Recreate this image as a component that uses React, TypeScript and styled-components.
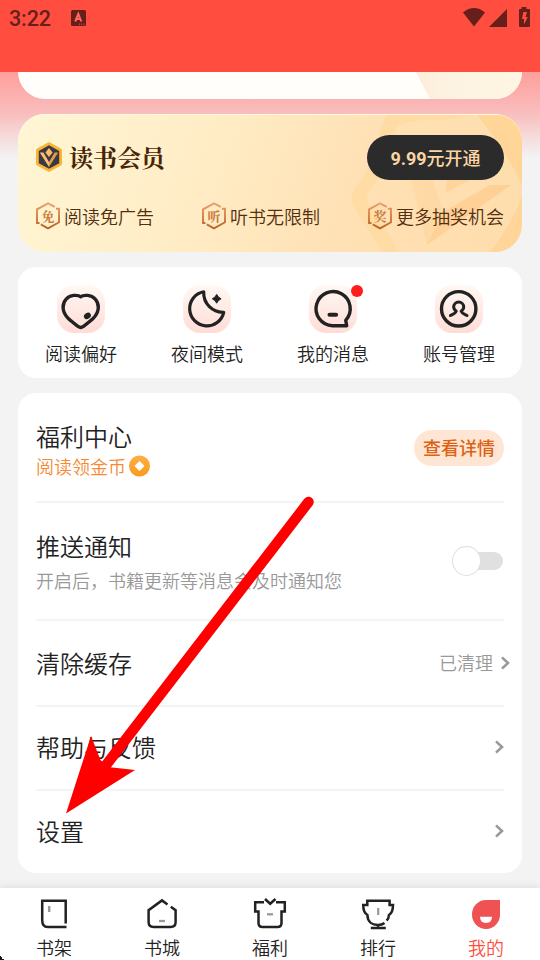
import React from "react";
import styled, { createGlobalStyle } from "styled-components";

const Global = createGlobalStyle`
  * { box-sizing: border-box; }
  body { margin: 0; background: #f3f3f3; }
`;

const sans = `"Noto Sans CJK SC", "Noto Sans", sans-serif`;
const light = `"Noto Sans CJK SC DemiLight", "Noto Sans CJK SC", "Noto Sans", sans-serif`;

const Page = styled.div`
  position: relative;
  width: 540px;
  height: 960px;
  overflow: hidden;
  display: flex;
  flex-direction: column;
  background: #f3f3f3;
  color: #222;
  font-family: ${light};
  font-weight: 350;
  svg { display: block; flex: none; }
`;

const StatusBar = styled.header`
  flex: none;
  height: 72px;
  background: #ff4e40;
  color: #661f1a;
  display: flex;
  align-items: flex-start;
  padding: 0 9px;
`;

const Clock = styled.span`
  font: 500 21.500px/37px Roboto, sans-serif;
  letter-spacing: -0.1px;
  width: 62px;
`;

const StatusIcons = styled.div`
  display: flex;
  align-items: center;
  height: 36px;
  &:last-child { margin-left: auto; }
`;

const Content = styled.main`
  flex: none;
  height: 816px;
  padding: 0 18px;
  display: flex;
  flex-direction: column;
  gap: 15px;
  background: linear-gradient(#fd9f9b 0px, #f9bebe 42px, #f6d8d7 62px, #f3f3f3 86px);
`;

const UpperCard = styled.section`
  flex: none;
  height: 27px;
  border-radius: 0 0 28px 28px;
  overflow: hidden;
  background: #fffefb;
  display: flex;
  justify-content: flex-end;
`;

const MemberCard = styled.section`
  position: relative;
  flex: none;
  height: 138px;
  padding: 20px 18px;
  border-radius: 27px;
  overflow: hidden;
  background: linear-gradient(110deg, #fff6d4 0%, #ffecc5 38%, #ffe1b5 65%, #ffddac 100%);
  box-shadow: inset 0 1px 0 #fffbe0;
`;

const Watermark = styled.svg`
  position: absolute;
  right: 0;
  top: 0;
`;

const MemberRow = styled.div`
  position: relative;
  display: flex;
  align-items: center;
  justify-content: space-between;
`;

const MemberTitle = styled.h2`
  margin: 0 0 0 -1px;
  display: flex;
  align-items: center;
  gap: 6px;
  color: #482407;
  font: 700 24px/36px "Noto Serif CJK SC", "Noto Serif SC", ${sans};
`;

const OpenButton = styled.button`
  width: 137px;
  height: 45px;
  margin: 1px 0 0;
  padding: 0;
  border: 0;
  border-radius: 23px;
  background: #2b2b2b;
  color: #fcd5a5;
  font: 500 18px/45px "Noto Sans CJK SC Medium", ${sans};
`;

const Digits = styled.span`
  font-family: Roboto, sans-serif;
  font-weight: 700;
`;

const Perks = styled(MemberRow)`
  margin-top: 19px;
  height: 34px;
`;

const Perk = styled.div`
  display: flex;
  align-items: center;
  gap: 4px;
  color: #542e0d;
  font-size: 18px;
  line-height: 34px;
  white-space: nowrap;
`;

const PerkBadge = styled.span`
  display: grid;
  width: 24px;
  height: 28px;
  place-items: center;
  > * { grid-area: 1 / 1; }
  color: #ca7a3c;
  font: 700 13px/28px "Noto Serif CJK SC", "Noto Serif SC", ${sans};
`;

const QuickCard = styled.section`
  flex: none;
  height: 111px;
  border-radius: 18px;
  background: #fff;
  display: grid;
  grid-template-columns: repeat(4, 1fr);
  padding-top: 18px;
`;

const QuickItem = styled.div`
  display: flex;
  flex-direction: column;
  align-items: center;
  font-size: 18px;
  line-height: 26px;
  gap: 7px;
`;

const QuickIcon = styled.div`
  position: relative;
  width: 48px;
  height: 48px;
  border-radius: 17px;
  background: linear-gradient(#fff8f4, #ffdcd5);
`;

const UnreadDot = styled.i`
  position: absolute;
  left: 42px;
  top: 0;
  width: 12px;
  height: 12px;
  border-radius: 50%;
  background: #ff1c1c;
`;

const ListCard = styled.section`
  flex: none;
  height: 480px;
  border-radius: 18px;
  background: #fff;
  padding: 0 18px;
`;

const Row = styled.div<{ $height: number; $lift?: number }>`
  height: ${(p) => p.$height}px;
  padding-bottom: ${(p) => p.$lift ?? 0}px;
  display: flex;
  align-items: center;
  justify-content: space-between;
  border-bottom: 2px solid #f4f4f4;
  &:last-child { border-bottom: 0; }
`;

const RowText = styled.div`
  display: flex;
  flex-direction: column;
`;

const RowTitle = styled.div<{ $single?: boolean }>`
  font-size: 24px;
  line-height: 34px;
  margin-bottom: ${(p) => (p.$single ? 1 : 0)}px;
`;

const Reward = styled.div`
  display: flex;
  align-items: center;
  gap: 3px;
  color: #f58a35;
  font-size: 18px;
  line-height: 24px;
  margin: 1px 0 -2px;
  svg { margin-top: 1px; }
`;

const Hint = styled.div`
  color: #999;
  font-size: 18px;
  line-height: 26px;
  margin: 4px 0 0;
`;

const DetailButton = styled.button`
  width: 90px;
  height: 36px;
  margin-top: 2px;
  padding: 0 0 2px;
  border: 0;
  border-radius: 18px;
  background: #ffe6d4;
  color: #dc6214;
  font: 500 18px/34px "Noto Sans CJK SC Medium", ${sans};
`;

const Toggle = styled.div`
  width: 52px;
  height: 30px;
  display: flex;
  align-items: center;
  background: linear-gradient(#e0e0e0, #e0e0e0) 15px 6px / 20px 18px no-repeat;
  &::after {
    content: "";
    width: 22px;
    height: 18px;
    background: #e0e0e0;
    border-radius: 0 9px 9px 0;
  }
`;

const Knob = styled.i`
  width: 29px;
  height: 30px;
  border: 1px solid #dedede;
  border-radius: 50%;
  background: #fff;
`;

const RowEnd = styled.div`
  display: flex;
  align-items: center;
  gap: 8px;
  margin-right: -6px;
  color: #999;
  font-size: 18px;
  line-height: 26px;
`;

const RowValue = styled.span`
  margin-bottom: 2px;
`;

const Nav = styled.nav`
  position: relative;
  flex: none;
  height: 72px;
  background: #fff;
  box-shadow: 0 -1px 8px rgba(0, 0, 0, 0.09);
  display: grid;
  grid-template-columns: repeat(5, 1fr);
`;

const NavItem = styled.div<{ $active?: boolean }>`
  display: flex;
  flex-direction: column;
  align-items: center;
  padding-top: 8px;
  color: ${(p) => (p.$active ? "#ff4e40" : "#222")};
  font-size: 18px;
  line-height: 26px;
  gap: 2px;
`;

const Pointer = styled.svg`
  position: absolute;
  left: 60px;
  top: 490px;
  pointer-events: none;
`;

const Corner = styled.svg`
  position: absolute;
  left: 0;
  bottom: 0;
`;

const Chevron = () => (
  <svg width="9" height="14" viewBox="0 0 9 14" fill="none" stroke="#999" strokeWidth="2.600">
    <path d="M1 1.400 7 7l-6 5.600" />
  </svg>
);

const MemberLogo = () => (
  <svg width="28" height="32" viewBox="0 0 28 32">
    <path d="M13 1.600q1-.6 2 0l10.800 6q1.200.7 1.200 2v12.800q0 1.300-1.200 2L15 30.400q-1 .6-2 0l-10.800-6Q1 23.700 1 22.400V9.600q0-1.300 1.200-2z" fill="#fbb332" />
    <path d="M14 4.200 24.200 10v12.200L14 27.800 3.800 22.200V10z" fill="#373a42" />
    <path d="M4.800 11.500h3.600L14 21v5z" fill="#ffbe72" />
    <path d="M14 21l5.600-9.500h3.600L14 26z" fill="#e9974b" />
    <path d="M14 7 17.600 11.500 14 16 10.400 11.500z" fill="#ffba68" />
  </svg>
);

const Perked = ({ mark, children }: { mark: string; children: string }) => (
  <Perk>
    <PerkBadge>
      <svg width="24" height="28" viewBox="0 0 24 28" fill="none" strokeWidth="1.900">
        <defs>
          <linearGradient id="bronze" x1="0" y1="0" x2="0" y2="28" gradientUnits="userSpaceOnUse">
            <stop stopColor="#eca56c" />
            <stop offset="1" stopColor="#b95f22" />
          </linearGradient>
        </defs>
        <path d="M3.500 21H1V7.300l11-6 6.800 3.600M20 6.800h3v13.500l-11 6-7.200-4" stroke="url(#bronze)" />
      </svg>
      <span>{mark}</span>
    </PerkBadge>
    {children}
  </Perk>
);

const ink = { fill: "none", stroke: "#222", strokeWidth: 3.4, strokeLinejoin: "round" as const, strokeLinecap: "round" as const };

const quickItems = [
  {
    label: "阅读偏好",
    art: (
      <>
        <path {...ink} d="M24 12c2-1.800 4.500-1.600 7-1.400 6 .5 10.600 5.400 10.600 11.800 0 9-8.600 14.600-15.300 19.400q-2.300 1.600-4.600 0C15 37 6.400 31.400 6.400 22.400c0-6.400 4.600-11.300 10.600-11.800 2.500-.2 5-.4 7 1.400z" />
        <ellipse cx="30.700" cy="31" rx="3.700" ry="2.900" transform="rotate(-35 30.700 31)" fill="#222" />
      </>
    ),
  },
  {
    label: "夜间模式",
    art: (
      <>
        <path {...ink} strokeWidth={3.2} d="M21 7A17.200 17.200 0 1 0 41 27.500C30 28 20.500 19 21 7z" />
        <path d="M34 9.600Q35.300 12.700 38.400 14 35.300 15.300 34 18.400 32.700 15.300 29.600 14 32.700 12.700 34 9.600z" fill="#222" stroke="#222" strokeWidth="1" />
      </>
    ),
  },
  {
    label: "我的消息",
    unread: true,
    art: (
      <>
        <path {...ink} d="M38 41H23.800A17.100 17.100 0 1 1 37 35.500z" />
        <path {...ink} strokeWidth={4} d="M20.800 30h6.600" />
      </>
    ),
  },
  {
    label: "账号管理",
    art: (
      <>
        <circle {...ink} cx="24" cy="24" r="17.200" />
        <path {...ink} strokeWidth={3} d="M15.700 30.700C19 29 21 28.500 21.600 26.400 19.500 25 19 23.700 19 22.200a5 5 0 0 1 10 0c0 1.500-.5 2.800-2.600 4.200C27 28.500 29 29 32.300 30.700" />
      </>
    ),
  },
];

const line = { fill: "none", stroke: "#222", strokeWidth: 2.5 };

const navItems = [
  {
    label: "书架",
    art: (
      <>
        <path {...line} d="M29.700 27.400V4.700H6.200V24q0 7 5.500 7H30.500" />
        <path d="M13.200 10v6" stroke="#999" strokeWidth="2.500" />
      </>
    ),
  },
  {
    label: "书城",
    art: (
      <>
        <path {...line} d="m23.500 8.400-5.500-4L4.600 14.200V26q0 5 5 5h17q5 0 5-5V14.200L26.800 10.700" />
        <path d="M15 25h6" stroke="#999" strokeWidth="2.300" />
      </>
    ),
  },
  {
    label: "福利",
    art: (
      <>
        <path {...line} d="M12 6.300H3.200v9.200H6.500V27q0 4 4 4h15q4 0 4-4V15.500h3.300V6.300H24M13 3l5.200 4.700L23.500 3" />
        <path d="M15 18.300h6" stroke="#999" strokeWidth="2.300" />
      </>
    ),
  },
  {
    label: "排行",
    art: (
      <>
        <path {...line} d="M26.600 24.500q2.200-2 2.400-5.500 4-2.500 4-10H29.600V4.700H7.300V9H3.200q0 7.500 4.200 10C7.500 26.500 13 29 18 29q4 0 6.500-2M18 29v3M10.800 32h15" />
        <path d="M18.200 12v7" stroke="#999" strokeWidth="2.200" />
      </>
    ),
  },
  {
    label: "我的",
    active: true,
    art: (
      <>
        <path d="M18 4h14v14a14 14.500 0 1 1-14-14z" fill="#ee5253" />
        <path d="M12 20.800h12q0 6.200-6 6.200t-6-6.200z" fill="#fff" />
      </>
    ),
  },
];

export default function App() {
  return (
    <>
      <Global />
      <Page>
        <StatusBar>
          <Clock>3:22</Clock>
          <StatusIcons>
            <svg width="15" height="16" viewBox="0 0 15 16">
              <rect width="15" height="16" rx="1.500" fill="#661f1a" />
              <path d="M4.200 11.500 7.300 4l3 7.500M5.300 9h4" fill="none" stroke="#ff6a5c" strokeWidth="2" />
              <path d="M8 14.200h6" stroke="#ff4e40" strokeWidth="1" strokeDasharray="1 1.200" />
            </svg>
          </StatusIcons>
          <StatusIcons>
            <svg width="68" height="22" viewBox="0 0 68 22" fill="#661f1a">
              <path d="M0 5.400Q11-3.400 22 5.400L11 19.400z" />
              <path d="M44 2v18H26z" />
              <path d="M58.500 0h5v2H66q1 0 1 1v16q0 1-1 1h-9q-1 0-1-1V3q0-1 1-1h1.500z" />
              <path d="M60.300 5 59 12h2v5.500L64.800 10H62.500L64 5z" fill="#ff4e40" />
            </svg>
          </StatusIcons>
        </StatusBar>
        <Content>
          <UpperCard>
            <svg width="106" height="27" viewBox="0 0 106 27">
              <defs>
                <linearGradient id="fold">
                  <stop stopColor="#fdecd8" />
                  <stop offset=".3" stopColor="#fdf3e2" />
                  <stop offset="1" stopColor="#fef5e3" />
                </linearGradient>
              </defs>
              <path d="M0 0h106v27H14z" fill="url(#fold)" />
            </svg>
          </UpperCard>
          <MemberCard>
            <Watermark width="176" height="138" viewBox="0 0 176 138">
              <path d="M41 1Q36 8 34 18T27 44Q20 60 9 74Q4 82 7 91L36 138H54L24 94Q19 86 22 78Q36 60 44 44Q46 24 52 11Q70 5 97 6L131 1z" fill="#ffd793" opacity=".5" />
              <path d="M131 1h45v70Q160 36 131 1z" fill="#ffcd80" opacity=".5" />
              <path d="M176 82v56h-32Q166 110 176 82z" fill="#ffcd80" opacity=".45" />
              <path d="M66 66h21l10 32-16 33z" fill="#ffcf94" opacity=".4" />
              <path d="M97 98 144 71h21L81 131z" fill="#ffc583" opacity=".55" />
              <path d="M101 66h22l-23 13z" fill="#ffcf94" opacity=".7" />
            </Watermark>
            <MemberRow>
              <MemberTitle>
                <MemberLogo />
                读书会员
              </MemberTitle>
              <OpenButton>
                <Digits>9.99</Digits>元开通
              </OpenButton>
            </MemberRow>
            <Perks>
              <Perked mark="免">阅读免广告</Perked>
              <Perked mark="听">听书无限制</Perked>
              <Perked mark="奖">更多抽奖机会</Perked>
            </Perks>
          </MemberCard>
          <QuickCard>
            {quickItems.map((item) => (
              <QuickItem key={item.label}>
                <QuickIcon>
                  <svg width="48" height="48" viewBox="0.300 0.200 48 48">{item.art}</svg>
                  {item.unread && <UnreadDot />}
                </QuickIcon>
                {item.label}
              </QuickItem>
            ))}
          </QuickCard>
          <ListCard>
            <Row $height={110}>
              <RowText>
                <RowTitle>福利中心</RowTitle>
                <Reward>
                  阅读领金币
                  <svg width="22" height="22" viewBox="0 0 22 22">
                    <defs>
                      <linearGradient id="coin" x1="0" y1="0" x2="0" y2="1">
                        <stop stopColor="#fbb043" />
                        <stop offset="1" stopColor="#fb9a1c" />
                      </linearGradient>
                    </defs>
                    <circle cx="10.500" cy="11" r="10.500" fill="url(#coin)" />
                    <path d="m10.500 7 4 4-4 4-4-4z" fill="#fff" stroke="#fff" strokeWidth="1.600" strokeLinejoin="round" />
                  </svg>
                </Reward>
              </RowText>
              <DetailButton>查看详情</DetailButton>
            </Row>
            <Row $height={118}>
              <RowText>
                <RowTitle>推送通知</RowTitle>
                <Hint>开启后，书籍更新等消息会及时通知您</Hint>
              </RowText>
              <Toggle>
                <Knob />
              </Toggle>
            </Row>
            <Row $height={86}>
              <RowTitle $single>清除缓存</RowTitle>
              <RowEnd>
                <RowValue>已清理</RowValue>
                <Chevron />
              </RowEnd>
            </Row>
            <Row $height={84} $lift={2}>
              <RowTitle $single>帮助与反馈</RowTitle>
              <Chevron />
            </Row>
            <Row $height={82} $lift={2}>
              <RowTitle $single>设置</RowTitle>
              <Chevron />
            </Row>
          </ListCard>
        </Content>
        <Nav>
          {navItems.map((item) => (
            <NavItem key={item.label} $active={item.active}>
              <svg width="36" height="36" viewBox="0 0 36 36">{item.art}</svg>
              {item.label}
            </NavItem>
          ))}
        </Nav>
        <Pointer width="260" height="330" viewBox="0 0 260 330">
          <path d="M248.500 12 43 279" stroke="#f00" strokeWidth="10.500" strokeLinecap="round" />
          <path d="M6 323.500 31 246l9.500 24 7.500 7 27 3z" fill="#f00" />
        </Pointer>
        <Corner width="4" height="4" viewBox="0 0 4 4">
          <path d="M0 0h1v1h1v2h2v1H0z" fill="#101820" />
        </Corner>
      </Page>
    </>
  );
}
